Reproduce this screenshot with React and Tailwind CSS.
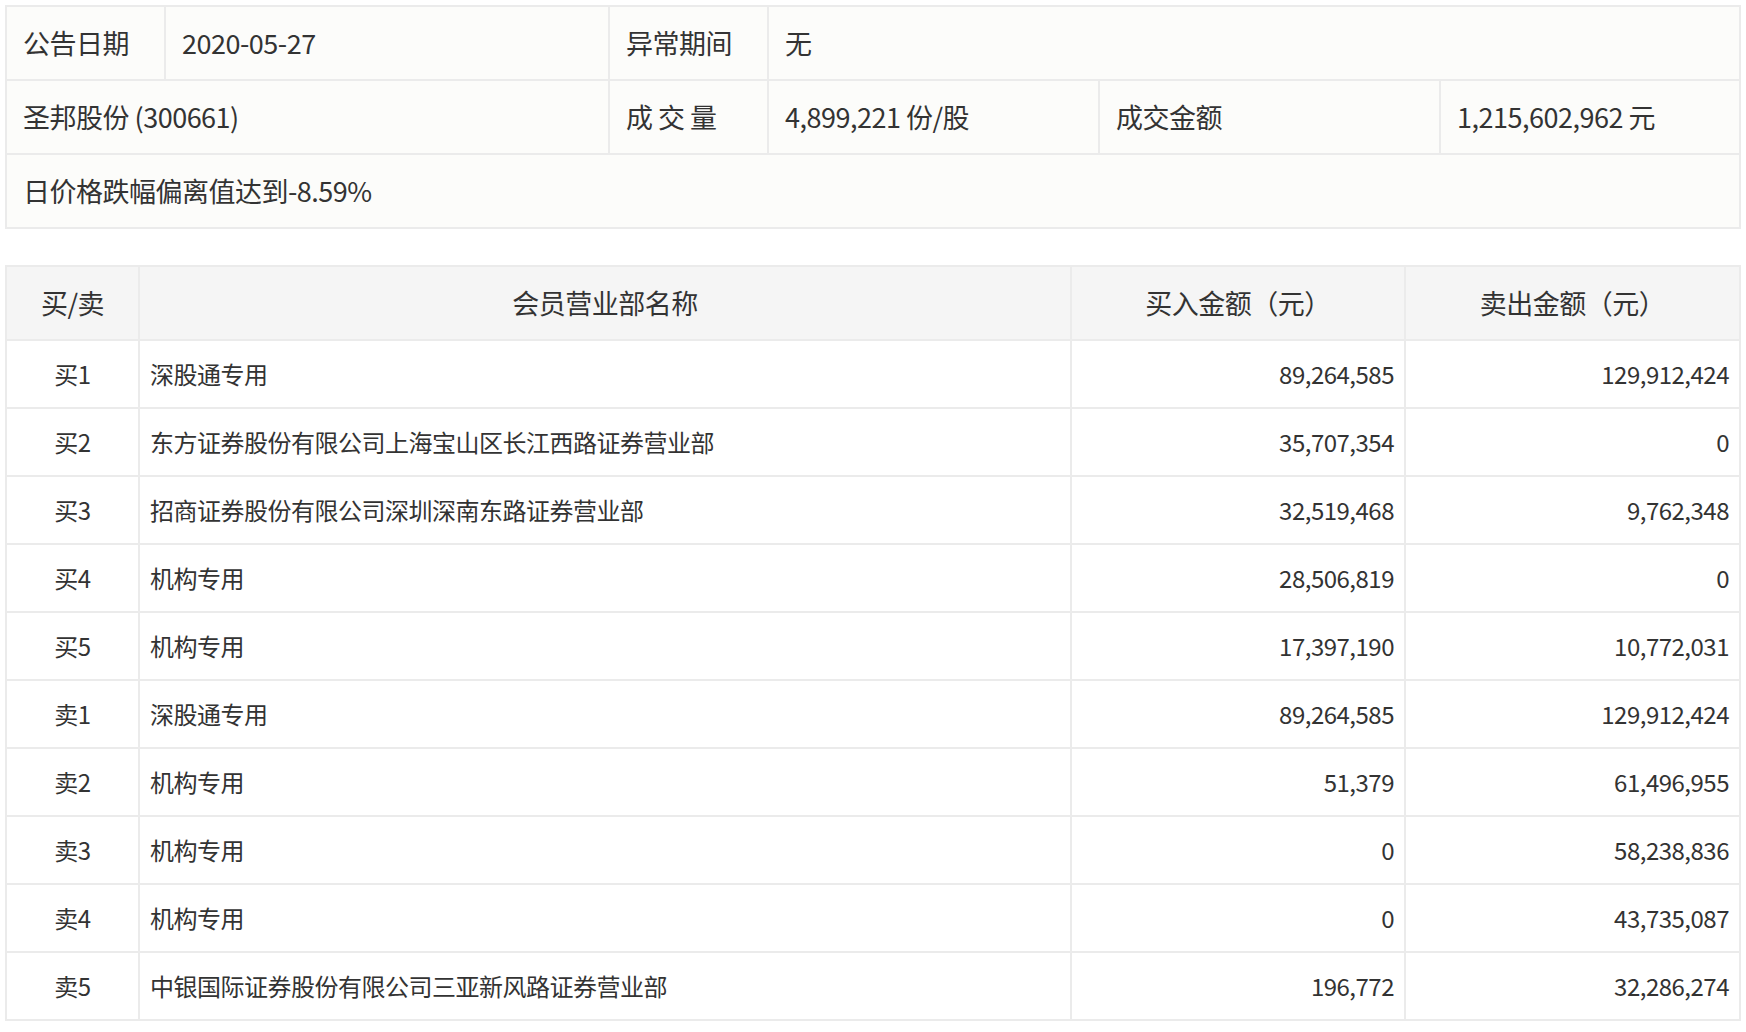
export default function App() {
  const f = { fontFamily: '"Noto Sans CJK SC", "Noto Sans", sans-serif' };
  const rows = [
    ["买1","深股通专用","89,264,585","129,912,424"],
    ["买2","东方证券股份有限公司上海宝山区长江西路证券营业部","35,707,354","0"],
    ["买3","招商证券股份有限公司深圳深南东路证券营业部","32,519,468","9,762,348"],
    ["买4","机构专用","28,506,819","0"],
    ["买5","机构专用","17,397,190","10,772,031"],
    ["卖1","深股通专用","89,264,585","129,912,424"],
    ["卖2","机构专用","51,379","61,496,955"],
    ["卖3","机构专用","0","58,238,836"],
    ["卖4","机构专用","0","43,735,087"],
    ["卖5","中银国际证券股份有限公司三亚新风路证券营业部","196,772","32,286,274"],
  ];
  const c = "border-2 border-[#ebebeb] px-[16px] align-middle";
  return (
    <div className="bg-white w-[1746px] h-[1032px] pt-[5px] pl-[5px] text-[#333]" style={f}>
      <table className="w-[1736px] border-collapse bg-[#fcfcfa] text-[27px] tracking-[-0.5px]">
        <tbody>
          <tr className="h-[74px]">
            <td className={c + " w-[159px]"}>公告日期</td>
            <td className={c + " w-[444px]"}>2020-05-27</td>
            <td className={c + " w-[159px]"}>异常期间</td>
            <td className={c} colSpan={3}>无</td>
          </tr>
          <tr className="h-[74px]">
            <td className={c} colSpan={2}>圣邦股份 (300661)</td>
            <td className={c}>成 交 量</td>
            <td className={c + " w-[331px]"}>4,899,221 份/股</td>
            <td className={c + " w-[341px]"}>成交金额</td>
            <td className={c}>1,215,602,962 元</td>
          </tr>
          <tr className="h-[74px]">
            <td className={c} colSpan={6}>日价格跌幅偏离值达到-8.59%</td>
          </tr>
        </tbody>
      </table>
      <table className="w-[1736px] border-collapse mt-[36px] text-[24px] tracking-[-0.5px]">
        <thead>
          <tr className="h-[74px] bg-[#f5f5f5] text-[27px]">
            <th className="border-2 border-[#ebebeb] font-normal w-[133px]">买/卖</th>
            <th className="border-2 border-[#ebebeb] font-normal w-[932px]">会员营业部名称</th>
            <th className="border-2 border-[#ebebeb] font-normal w-[334px]">买入金额（元）</th>
            <th className="border-2 border-[#ebebeb] font-normal">卖出金额（元）</th>
          </tr>
        </thead>
        <tbody>
          {rows.map((r, i) => (
            <tr key={i} className="h-[68px]">
              <td className="border-2 border-[#ebebeb] text-center">{r[0]}</td>
              <td className="border-2 border-[#ebebeb] px-[10px]">{r[1]}</td>
              <td className="border-2 border-[#ebebeb] px-[10px] text-right">{r[2]}</td>
              <td className="border-2 border-[#ebebeb] px-[10px] text-right">{r[3]}</td>
            </tr>
          ))}
        </tbody>
      </table>
    </div>
  );
}
